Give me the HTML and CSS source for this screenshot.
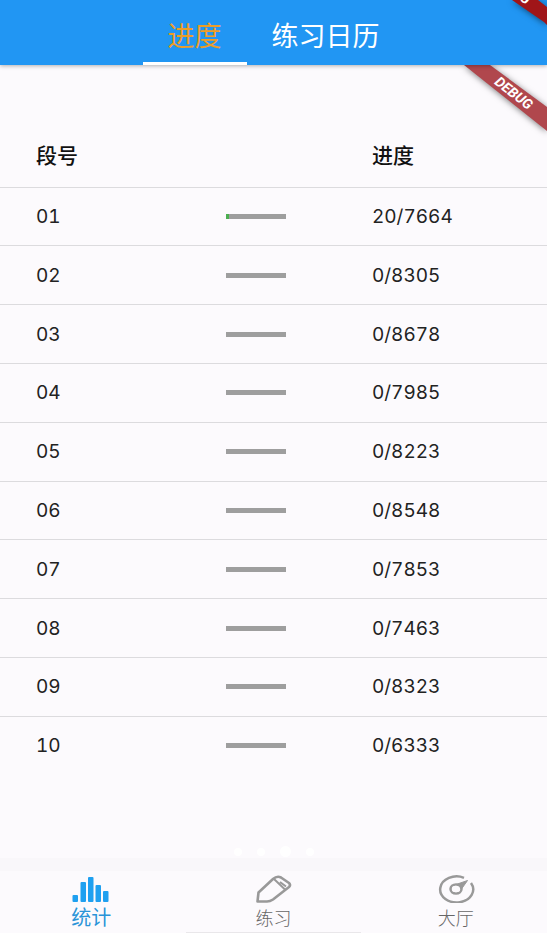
FILE: index.html
```html
<!DOCTYPE html>
<html lang="zh-CN">
<head>
    <meta charset="UTF-8">
    <meta name="viewport" content="width=device-width, initial-scale=1.0">
    <title>统计</title>
    <link rel="stylesheet" href="styles.css">
</head>
<body>
    <header class="app-bar">
        <nav class="tabs">
            <a class="tab active" href="#progress">进度</a>
            <a class="tab" href="#calendar">练习日历</a>
        </nav>
        <svg class="ribbon ribbon-top" width="47" height="36" viewBox="0 0 47 36" aria-hidden="true">
            <polygon class="band" points="12,0 38,0 47,7 47,25 44,22"/>
            <text class="ribbon-text" x="26" y="5" text-anchor="end" transform="rotate(38 26 5)">DEBUG</text>
        </svg>
    </header>

    <main class="content" id="progress">
        <svg class="ribbon" width="90" height="76" viewBox="0 0 90 76" aria-hidden="true">
            <polygon class="band" points="7,0 33,0 90,42 90,66"/>
            <text class="ribbon-text" x="57" y="33" text-anchor="middle" transform="rotate(38 57 28)">DEBUG</text>
        </svg>
        <table class="progress-table">
            <thead>
                <tr><th class="col-id">段号</th><th class="col-bar"></th><th>进度</th></tr>
            </thead>
            <tbody>
                <tr><td>01</td><td><div class="bar"><div class="bar-value" style="width: 5%"></div></div></td><td>20/7664</td></tr>
                <tr><td>02</td><td><div class="bar"></div></td><td>0/8305</td></tr>
                <tr><td>03</td><td><div class="bar"></div></td><td>0/8678</td></tr>
                <tr><td>04</td><td><div class="bar"></div></td><td>0/7985</td></tr>
                <tr><td>05</td><td><div class="bar"></div></td><td>0/8223</td></tr>
                <tr><td>06</td><td><div class="bar"></div></td><td>0/8548</td></tr>
                <tr><td>07</td><td><div class="bar"></div></td><td>0/7853</td></tr>
                <tr><td>08</td><td><div class="bar"></div></td><td>0/7463</td></tr>
                <tr><td>09</td><td><div class="bar"></div></td><td>0/8323</td></tr>
                <tr><td>10</td><td><div class="bar"></div></td><td>0/6333</td></tr>
            </tbody>
        </table>
        <div class="dots">
            <span class="dot"></span>
            <span class="dot"></span>
            <span class="dot dot-current"></span>
            <span class="dot"></span>
        </div>
    </main>

    <nav class="bottom-nav">
        <a class="nav-item active" href="#stats">
            <svg width="38" height="28" viewBox="0 0 38 28" fill="#1fa0f0" aria-hidden="true">
                <rect x="0.5" y="20" width="5.5" height="7" rx="1"/>
                <rect x="8.5" y="7" width="5.5" height="20" rx="1"/>
                <rect x="16" y="2" width="5.5" height="25" rx="1"/>
                <rect x="23.5" y="10" width="5.5" height="17" rx="1"/>
                <rect x="31" y="16" width="5.5" height="11" rx="1"/>
            </svg>
            <span>统计</span>
        </a>
        <a class="nav-item" href="#practice">
            <svg width="38" height="28" viewBox="0 0 38 28" fill="none" stroke="#999" stroke-width="2.6" stroke-linejoin="round" aria-hidden="true">
                <path d="M3.5 26.5 L4.5 17.5 L19 4 Q23 .5 27 2.5 L35 8 Q37 10 35 12 L19 24.5 Q16 26.5 13 26.5 Z"/>
                <path d="M20 4 L31 14.5 M26 7 L32 11.500" stroke-width="2"/>
            </svg>
            <span>练习</span>
        </a>
        <a class="nav-item" href="#hall">
            <svg width="38" height="28" viewBox="0 0 38 28" fill="none" stroke="#999" stroke-width="2.5" aria-hidden="true">
                <path d="M27 2.8 A16.5 13 0 1 0 34 8"/>
                <ellipse cx="19" cy="14" rx="5.500" ry="4.500"/>
                <path d="M19 9.500 L30.500 5.500 L24.500 14 Z" fill="#999" stroke-width="1"/>
                <ellipse cx="19" cy="14" rx="4" ry="3.200" fill="#fcfafd" stroke="none"/>
            </svg>
            <span>大厅</span>
        </a>
    </nav>
</body>
</html>
```
FILE: styles.css
```css
* {
    box-sizing: border-box;
}
html, body {
    margin: 0;
    padding: 0;
}
body {
    display: flex;
    flex-direction: column;
    min-height: 100vh;
    background: #fcfafd;
    color: #222;
    font-family: Inter, "Noto Sans CJK SC", sans-serif;
}
a {
    text-decoration: none;
}

/* top bar */
.app-bar {
    position: relative;
    z-index: 1;
    height: 65px;
    background: #2196f3;
    box-shadow: 0 1px 4px rgba(0, 0, 0, 0.3);
}
.tabs {
    display: flex;
    justify-content: center;
    height: 100%;
}
.tab {
    padding: 15px 25px 0;
    border-bottom: 3px solid transparent;
    color: #fff;
    font-family: "Noto Sans CJK SC", sans-serif;
    font-size: 27px;
    font-weight: 400;
    line-height: 40px;
}
.tab.active {
    border-color: #fff;
    color: #ee9d27;
}

/* corner ribbons */
.ribbon {
    position: absolute;
    top: 0;
    right: 0;
    overflow: hidden;
    pointer-events: none;
}
.band {
    fill: #b0474d;
    filter: drop-shadow(0 1px 3px rgba(0, 0, 0, 0.5));
}
.ribbon-top .band {
    fill: #a01518;
}
.ribbon-text {
    fill: #fff;
    font: italic 700 14px Roboto, sans-serif;
}

/* table */
.content {
    position: relative;
    flex: 1;
    display: flex;
    flex-direction: column;
    justify-content: space-between;
    padding-top: 56px;
}
.progress-table {
    width: 100%;
    height: 653px;
    border-collapse: collapse;
    table-layout: fixed;
    font-size: 19px;
    font-variant-numeric: tabular-nums;
}
.progress-table th,
.progress-table td {
    padding: 0;
    border-bottom: 1px solid #dcdbde;
    text-align: left;
}
.progress-table th {
    height: 66px;
    color: #111;
    font-size: 21px;
    font-weight: 500;
}
.progress-table th:first-child,
.progress-table td:first-child {
    padding-left: 36px;
}
.progress-table tbody tr:last-child td {
    border-bottom: none;
}
.col-id {
    width: 41.3%;
}
.col-bar {
    width: 26.7%;
}
.bar {
    width: 60px;
    height: 5px;
    background: #9e9e9e;
}
.bar-value {
    height: 100%;
    background: #4caf50;
}
.dots {
    display: flex;
    justify-content: center;
    align-items: center;
    gap: 15px;
    height: 13px;
}
.dot {
    width: 8px;
    height: 8px;
    border-radius: 50%;
    background: #fff;
}
.dot-current {
    width: 11px;
    height: 11px;
}

/* bottom navigation */
.bottom-nav {
    display: flex;
    height: 75px;
    padding-top: 17px;
    background:
        linear-gradient(#e9e7ea, #e9e7ea) center bottom / 32% 1px no-repeat,
        linear-gradient(#f9f7fa 13px, #fcfafd 13px);
}
.nav-item {
    flex: 1;
    display: flex;
    flex-direction: column;
    align-items: center;
    color: #666;
    font-family: "Noto Sans CJK SC", sans-serif;
    font-size: 18px;
    font-weight: 300;
    line-height: 28px;
}
.nav-item.active {
    color: #2a94d8;
    font-size: 20px;
    font-weight: 400;
}
```
